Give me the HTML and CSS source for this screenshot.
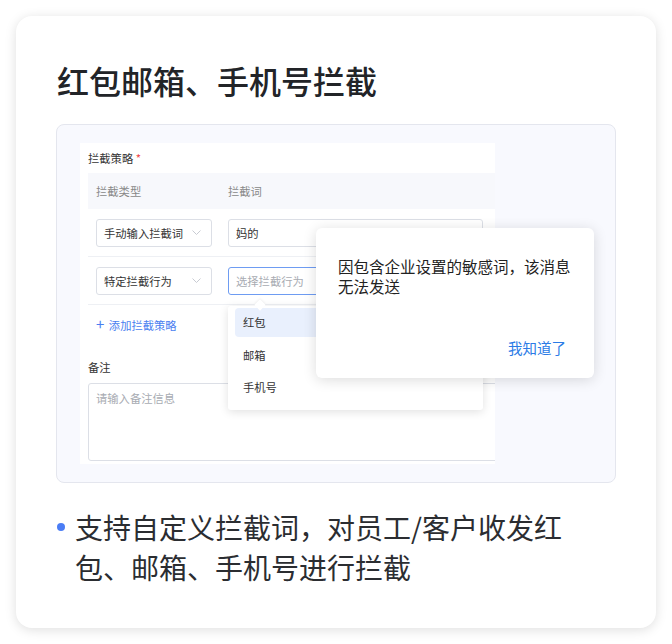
FILE: index.html
```html
<!DOCTYPE html>
<html lang="zh-CN">
<head>
    <meta charset="UTF-8">
    <title>红包邮箱、手机号拦截</title>
    <link rel="stylesheet" href="styles.css">
</head>
<body>
    <div class="card">
        <h1 class="title">红包邮箱、手机号拦截</h1>

        <div class="preview">
            <div class="form">
                <div class="label">拦截策略 <span class="req">*</span></div>

                <div class="table">
                    <div class="row head">
                        <div class="col1">拦截类型</div>
                        <div class="col2">拦截词</div>
                    </div>
                    <div class="row">
                        <div class="col1">
                            <div class="select">手动输入拦截词
                                <svg class="chev" width="9" height="5" viewBox="0 0 9 5"><path d="M0.5 0.5 L4.5 4.5 L8.5 0.5" fill="none" stroke="#c8cbd2" stroke-width="1"/></svg>
                            </div>
                        </div>
                        <div class="col2">
                            <div class="input">妈的</div>
                        </div>
                    </div>
                    <div class="row">
                        <div class="col1">
                            <div class="select">特定拦截行为
                                <svg class="chev" width="9" height="5" viewBox="0 0 9 5"><path d="M0.5 0.5 L4.5 4.5 L8.5 0.5" fill="none" stroke="#c8cbd2" stroke-width="1"/></svg>
                            </div>
                        </div>
                        <div class="col2 anchor">
                            <div class="input focus"><span class="ph">选择拦截行为</span></div>
                            <div class="dropdown">
                                <div class="arrow"></div>
                                <div class="opt active">红包</div>
                                <div class="opt">邮箱</div>
                                <div class="opt">手机号</div>
                            </div>
                        </div>
                    </div>
                </div>

                <div class="add"><span class="plus">+</span> 添加拦截策略</div>

                <div class="label note">备注</div>
                <div class="textarea"><span class="ph">请输入备注信息</span></div>
            </div>

            <div class="dialog">
                <p class="msg">因包含企业设置的敏感词，该消息无法发送</p>
                <div class="ok">我知道了</div>
            </div>
        </div>

        <div class="point">
            <span class="dot"></span>
            <p>支持自定义拦截词，对员工/客户收发红包、邮箱、手机号进行拦截</p>
        </div>
    </div>
</body>
</html>
```

FILE: styles.css
```css
body {
    margin: 0;
    background-color: #ffffff;
    font-family: "Noto Sans CJK SC", "Noto Sans", sans-serif;
}

.card {
    margin: 16px;
    width: 640px;
    height: 612px;
    box-sizing: border-box;
    padding: 44px 40px 0 40px;
    background-color: #fff;
    border-radius: 16px;
    box-shadow: 0 2px 12px rgba(0, 0, 0, 0.13);
}

.title {
    margin: 0 0 24px 1px;
    font-size: 32px;
    line-height: 40px;
    font-weight: 500;
    color: #222428;
}

.preview {
    position: relative;
    height: 359px;
    box-sizing: border-box;
    padding: 18px 0 0 23px;
    background-color: #f8f9fe;
    border: 1px solid #e4e6ee;
    border-radius: 8px;
}

.form {
    width: 415px;
    height: 321px;
    box-sizing: border-box;
    padding: 0 0 0 8px;
    background-color: #fff;
    overflow: hidden;
    font-size: 11.3px;
    color: #333;
}

.label {
    height: 30px;
    line-height: 30px;
}

.req {
    color: #f0484a;
}

.table {
    width: 420px;
}

.row {
    display: flex;
    align-items: center;
    height: 47px;
    border-bottom: 1px solid #eef0f4;
}

.row.head {
    height: 36px;
    border-bottom: none;
    background-color: #f7f8fc;
    color: #888;
}

.col1 {
    width: 132px;
    padding-left: 8px;
}

.col2 {
    flex: 1;
}

.anchor {
    position: relative;
}

.select,
.input {
    display: flex;
    align-items: center;
    height: 28px;
    box-sizing: border-box;
    padding: 0 7px;
    border: 1px solid #dcdfe6;
    border-radius: 3px;
}

.select {
    width: 116px;
    justify-content: space-between;
}

.chev {
    margin-right: 3px;
}

.input {
    width: 255px;
}

.input.focus {
    border-color: #6e9cf2;
}

.ph {
    color: #a8abb2;
}

.add {
    height: 38px;
    line-height: 38px;
    padding-left: 8px;
    color: #4a7ef0;
}

.plus {
    font-size: 15px;
    margin-right: 2px;
}

.note {
    margin-top: 16px;
    height: 16px;
    line-height: 16px;
    margin-bottom: 8px;
}

.textarea {
    width: 440px;
    height: 78px;
    box-sizing: border-box;
    padding: 6px 7px;
    border: 1px solid #dcdfe6;
    border-radius: 3px;
}

.dropdown {
    position: absolute;
    left: 0;
    top: 39px;
    width: 255px;
    height: 104px;
    box-sizing: border-box;
    padding: 2px 7px;
    background-color: #fff;
    border-radius: 3px;
    box-shadow: 0 2px 10px rgba(0, 0, 0, 0.12);
    z-index: 2;
}

.arrow {
    position: absolute;
    left: 28px;
    top: -5px;
    width: 8px;
    height: 8px;
    background-color: #fff;
    transform: rotate(45deg);
    box-shadow: -1px -1px 2px rgba(0, 0, 0, 0.05);
}

.opt {
    height: 32px;
    line-height: 30px;
    padding-left: 8px;
    border-radius: 4px;
}

.opt.active {
    height: 29px;
    line-height: 29px;
    margin-bottom: 3px;
    background-color: #e9f0fd;
}

.dialog {
    position: absolute;
    left: 259px;
    top: 103px;
    width: 278px;
    height: 150px;
    box-sizing: border-box;
    padding: 28px 28px 0 22px;
    background-color: #fff;
    border-radius: 6px;
    box-shadow: 0 2px 14px rgba(0, 0, 0, 0.14);
    z-index: 3;
}

.msg {
    margin: 0 -16px 0 0;
    font-size: 15.5px;
    line-height: 20px;
    color: #222;
}

.ok {
    margin-top: 42px;
    text-align: right;
    font-size: 14.5px;
    line-height: 20px;
    color: #2b7be6;
}

.point {
    display: flex;
    align-items: flex-start;
    margin-top: 24px;
}

.dot {
    flex: none;
    width: 8px;
    height: 8px;
    margin: 16px 10px 0 1px;
    border-radius: 50%;
    background-color: #4b7df5;
}

.point p {
    margin: 0;
    width: 500px;
    font-size: 28px;
    line-height: 40px;
    color: #2b2d31;
}
```
